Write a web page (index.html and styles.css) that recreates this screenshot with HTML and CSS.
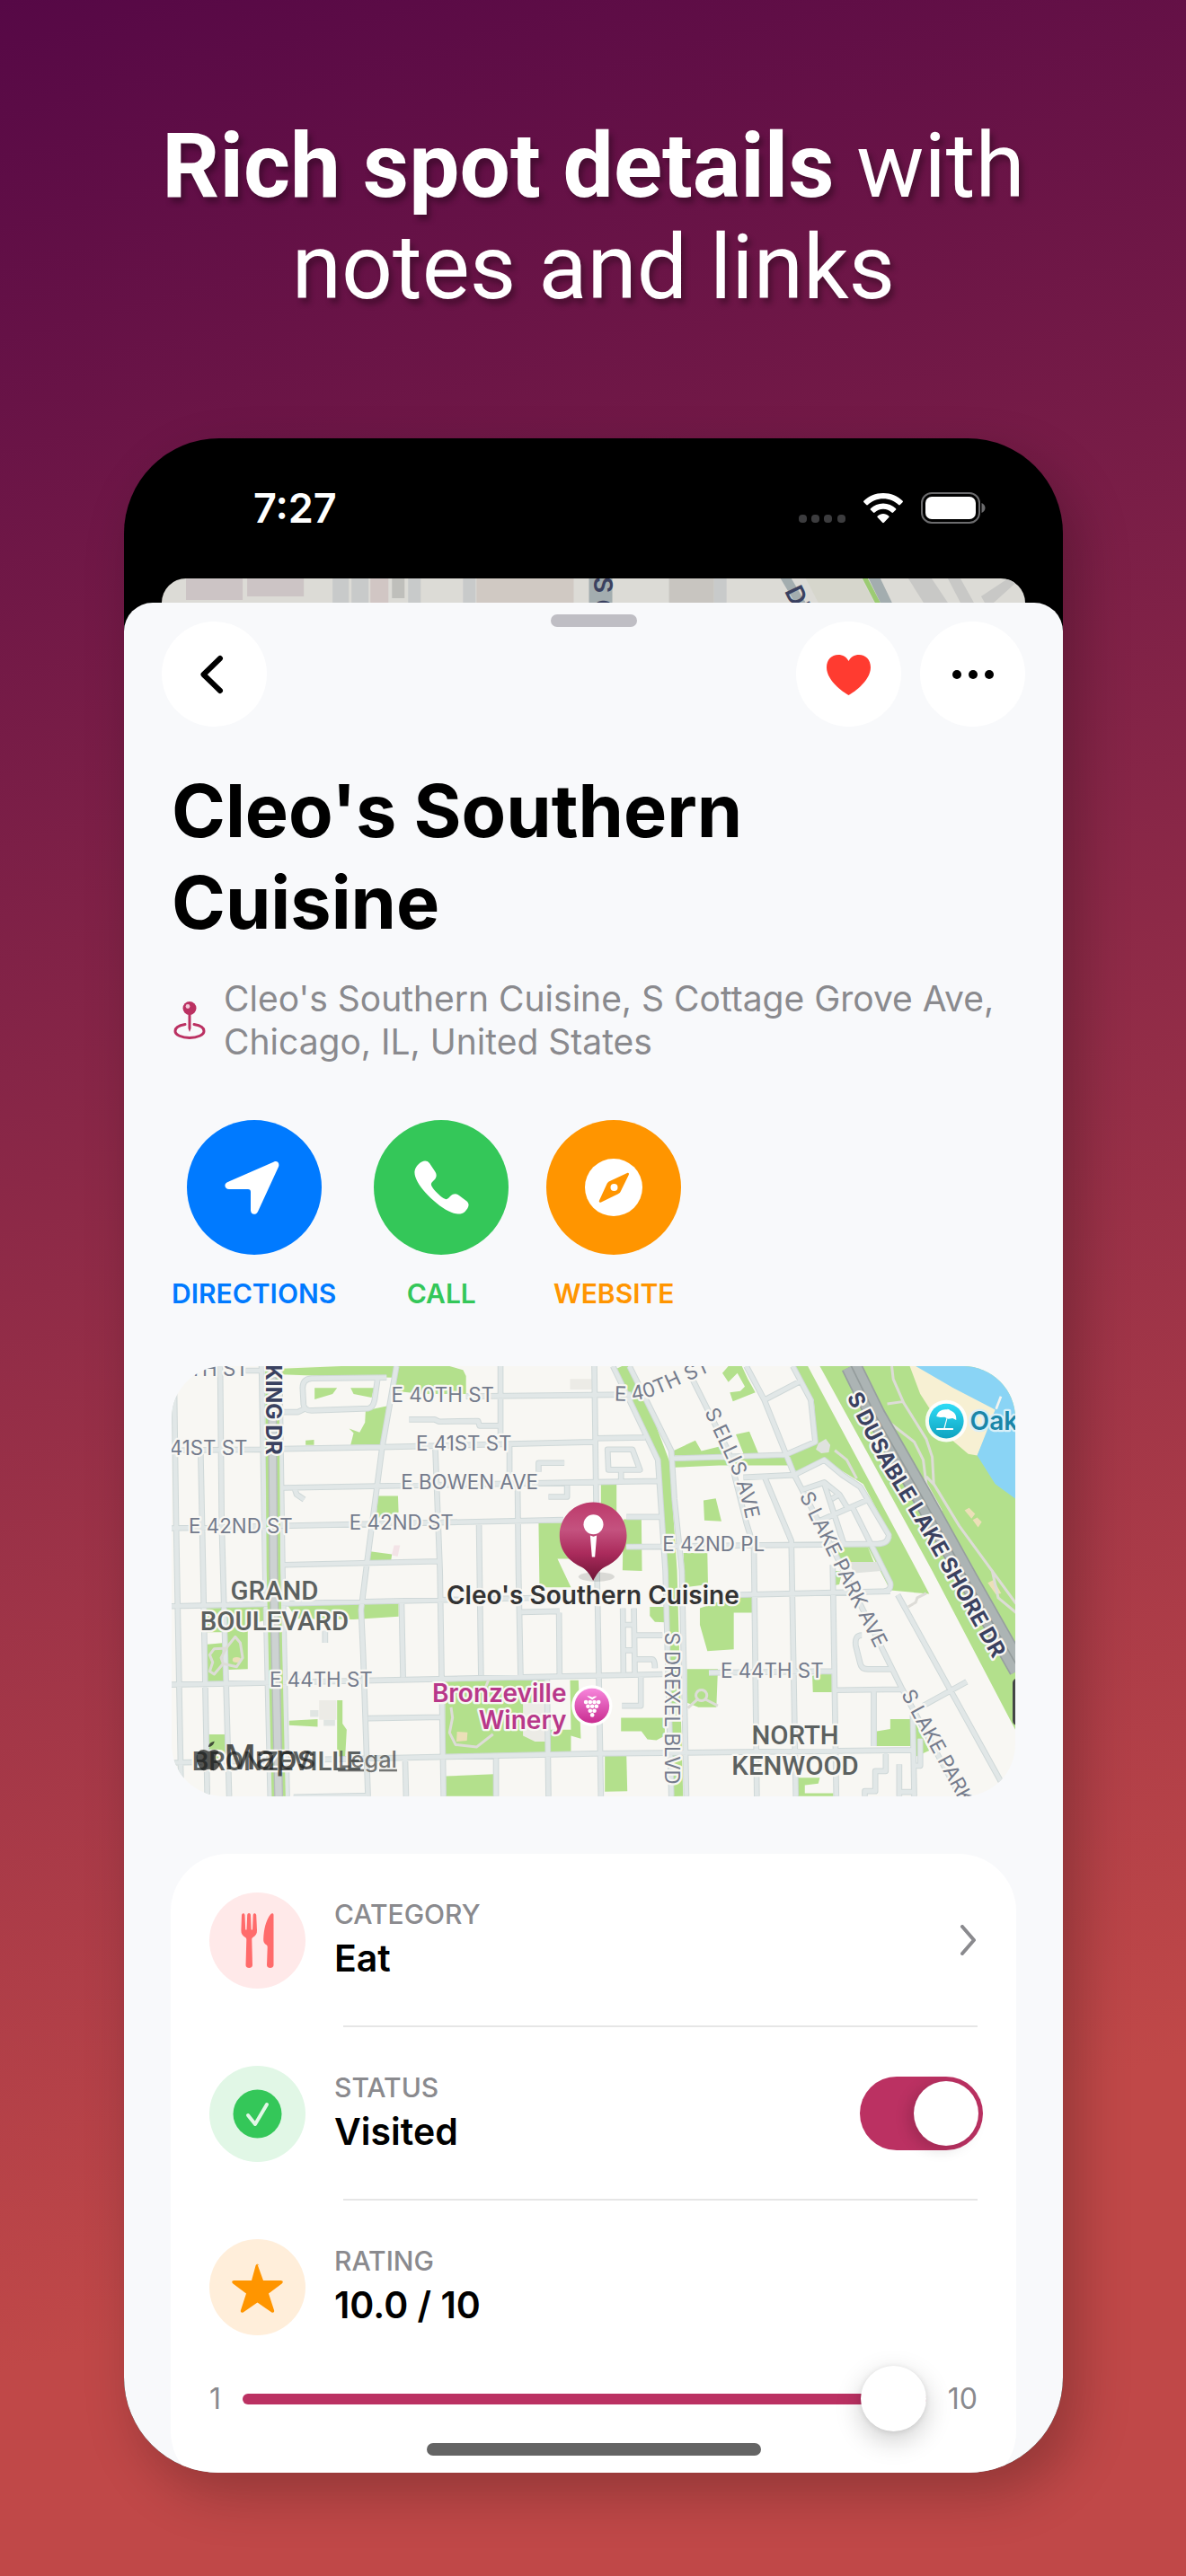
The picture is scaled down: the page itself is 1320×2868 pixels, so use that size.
FILE: index.html
```html
<!DOCTYPE html>
<html lang="en">
<head>
<meta charset="utf-8">
<meta name="viewport" content="width=device-width, initial-scale=1">
<title>Rich spot details with notes and links</title>
<link rel="stylesheet" href="styles.css">
</head>
<body>
<main class="poster">
  <h1 class="headline"><strong>Rich spot details</strong> with<br>notes and links</h1>

  <section class="phone">
    <header class="status-bar">
      <span class="time">7:27</span>
      <div class="indicators">
        <svg class="signal" viewBox="0 0 52 34" aria-hidden="true"><g fill="#3c3c3e"><rect x="0" y="24" width="9" height="9" rx="4"/><rect x="14" y="24" width="9" height="9" rx="4"/><rect x="28" y="24" width="9" height="9" rx="4"/><rect x="43" y="24" width="9" height="9" rx="4"/></g></svg>
        <svg class="wifi" viewBox="0 0 44 34" aria-hidden="true"><g fill="#fff"><path d="M22 0C13.500 0 5.800 3.300.5 8.500c-.6.600-.6 1.200 0 1.800l2.700 2.700c.5.500 1.200.5 1.700 0C9.400 8.800 15.400 6.300 22 6.300S34.600 8.800 39.100 13c.5.500 1.200.5 1.700 0l2.700-2.700c.6-.6.600-1.200 0-1.800C38.200 3.300 30.500 0 22 0z"/><path d="M22 11.500c-5.400 0-10.300 2.100-13.900 5.500-.6.600-.6 1.300 0 1.800l2.800 2.700c.5.500 1.100.5 1.700 0 2.400-2.300 5.700-3.700 9.400-3.700s7 1.400 9.400 3.700c.6.500 1.200.5 1.700 0l2.800-2.700c.6-.5.600-1.200 0-1.800-3.600-3.400-8.500-5.500-13.900-5.500z"/><path d="M22 23c-2.400 0-4.600.9-6.200 2.400-.6.500-.6 1.200-.1 1.700l5.400 5.600c.6.600 1.200.6 1.800 0l5.400-5.600c.5-.5.500-1.200-.1-1.700C26.600 23.900 24.400 23 22 23z"/></g></svg>
        <svg class="battery" viewBox="0 0 72 36" aria-hidden="true"><rect x="1" y="1" width="64" height="33" rx="11" fill="none" stroke="#6b6b6d" stroke-width="2"/><rect x="5" y="5" width="56" height="25" rx="7" fill="#fff"/><path d="M67.500 12c2.500 1 4 3 4 5.500s-1.500 4.500-4 5.500z" fill="#6b6b6d"/></svg>
      </div>
    </header>

    <svg class="peek" viewBox="0 0 960 27" preserveAspectRatio="xMidYMin slice" aria-hidden="true">
      <rect width="960" height="27" fill="#dcdbd6"/>
      <path fill="#ccc4c5" d="M27 0h63v24H27zM95 0h63v20H95z"/>
      <path fill="#c8caca" d="M190 0h18v27h-18zM211 0h19v27h-19zM274 0h14v27h-14zM335 0h14v27h-14zM614 0h14v27h-14z"/>
      <path fill="#d1c6c4" d="M232 0h20v27h-20z"/><path fill="#bfbfbb" d="M256 0h14v22h-14z"/>
      <path fill="#d0c9c3" d="M350 0h108v27H350z"/><path fill="#c8c5c0" d="M564 0h50v27h-50z"/>
      <path fill="#a3adaf" d="M475 0h26v27h-26z"/>
      <path fill="#9ccb73" d="M779 0h6l14 27h-6z"/><path fill="#a3adaf" d="M786 0h13l13 27h-13zM688 0h12l16 27h-12z"/>
      <path fill="#c8c8c6" d="M830 0h26l18 27h-27zM874 0h14l15 27h-15zM911 20l30-20h14L925 27h-10z"/>
      <path fill="#d6d6cc" d="M716 0h62l14 27h-62z"/>
      <g class="peek-label"><text x="0" y="0" transform="translate(480 -2) rotate(90)">S C</text><text x="0" y="0" transform="translate(692 14) rotate(64)">DR</text></g>
    </svg>

    <article class="sheet">
      <span class="grabber"></span>
      <nav class="toolbar">
        <button class="round" type="button" aria-label="Back"><svg viewBox="0 0 117 117"><path d="M65 41 46.500 59 65 77" fill="none" stroke="#000" stroke-width="6" stroke-linecap="round" stroke-linejoin="round"/></svg></button>
        <div class="toolbar-end">
          <button class="round" type="button" aria-label="Favorite"><svg viewBox="0 0 117 117"><path d="M58.500 82C53 79 34 66 34 51c0-8.500 5.500-14 13-14 5 0 9.300 2.600 11.500 7 2.200-4.400 6.500-7 11.500-7 7.500 0 13 5.500 13 14 0 15-19 28-24.500 31z" fill="#ff3b30"/></svg></button>
          <button class="round" type="button" aria-label="More"><svg viewBox="0 0 117 117"><circle cx="41" cy="59" r="5"/><circle cx="59" cy="59" r="5"/><circle cx="77" cy="59" r="5"/></svg></button>
        </div>
      </nav>

      <h2 class="name">Cleo's Southern Cuisine</h2>
      <p class="address">
        <svg class="address-pin" viewBox="0 0 36 42" aria-hidden="true"><g fill="none" stroke="#bb3162"><path d="M13 25.500C6 26.500 2 29.500 2 33c0 4 7 7.500 16 7.500S34 37 34 33c0-3.500-4-6.500-11-7.500" stroke-width="3" stroke-linecap="round"/></g><path d="M16.500 12h3v18L18 34l-1.500-4z" fill="#bb3162"/><circle cx="18" cy="7.500" r="7.500" fill="#bb3162"/><circle cx="16" cy="5.500" r="2.400" fill="#f3c9d8"/></svg>
        <span>Cleo's Southern Cuisine, S Cottage Grove Ave, Chicago, IL, United States</span>
      </p>

      <div class="actions">
        <button class="action directions" type="button"><svg viewBox="0 0 150 150" aria-hidden="true"><path d="M97 46.500c3.500-1.500 6.500 1.500 5 5.500L79 102c-2.200 4.500-8 3.500-8-1.500V80c0-2-1-3-3-3H47c-5 0-6.500-6-1.500-8z" fill="#fff"/></svg>DIRECTIONS</button>
        <button class="action call" type="button"><svg viewBox="0 0 150 150" aria-hidden="true"><path d="M50 49c4-4 9-5 12-1l6 9c2.500 3.500 2 7-.5 9.500l-2.500 2.500c-1.500 1.500-1.500 3 0 5.500 2 3.500 9 10.500 12.500 12.500 2.500 1.500 4 1.500 5.500 0l2.500-2.500c3-2.500 6-3 9.500-.5l8 6c4.500 3.500 2.500 8-1.500 12-4.500 4-11 3-18-.5C65 92 44 69 45.500 57c.4-3.500 2-5.500 4.500-8z" fill="#fff"/></svg>CALL</button>
        <button class="action website" type="button"><svg viewBox="0 0 150 150" aria-hidden="true"><circle cx="75" cy="75" r="32" fill="#fff"/><path d="M90 59c1.500-.7 2.500.4 1.800 2L83 79c-.6 1.500-1.500 2.500-3 3.200L61 91.500c-1.700.8-2.800-.3-2-2L67.500 71c.6-1.300 1.400-2.200 2.700-2.800z" fill="#ff9500"/><circle cx="75.500" cy="75" r="4" fill="#fff"/></svg>WEBSITE</button>
      </div>

      <figure class="map">
        <svg viewBox="33 37 2814 1434" preserveAspectRatio="xMidYMid slice" role="img" aria-label="Map around Cleo's Southern Cuisine">
          <defs>
            <linearGradient id="pin" x1="0" y1="0" x2="0" y2="1"><stop offset="0" stop-color="#bd3a6b"/><stop offset=".35" stop-color="#c4527f"/><stop offset=".65" stop-color="#ab2b5c"/><stop offset="1" stop-color="#6e1436"/></linearGradient>
            <linearGradient id="grape" x1="0" y1="0" x2="0" y2="1"><stop offset="0" stop-color="#f786dc"/><stop offset="1" stop-color="#c92c90"/></linearGradient>
            <linearGradient id="beach" x1="0" y1="0" x2="0" y2="1"><stop offset="0" stop-color="#2fdcf6"/><stop offset="1" stop-color="#0fa3c0"/></linearGradient>
            <path id="p40" d="M1510 152 C1600 160 1660 130 1720 102 L1880 32"/>
            <path id="pellis" d="M1810 190 L1900 380 Q1940 480 1962 620"/>
            <path id="plake" d="M2126 470 L2425 1070"/>
            <path id="plake2" d="M2466 1132 L2720 1596"/>
            <path id="pdusable" d="M2284 140 L2400 370 L2540 600 L2900 1240"/>
          </defs>
          <rect x="33" y="37" width="2820" height="1440" fill="#f8f7f3"/>

          <g fill="#b3e08c">
            <path d="M400 45 600 37H780L770 75 480 68 400 65zM785 37H960L1005 50 1015 70V130H870L780 120zM510 110H585L570 130 510 148zM630 110H708L700 142 640 130zM680 185 750 170 738 298 630 300 640 260 625 245 660 258 678 225zM480 285 508 283V300H480zM722 470H788L790 525 715 545zM695 655 768 665 765 685 692 688zM1257 560H1400V680H1320L1365 775H1260z"/>
            <path d="M150 845 345 838V885L287 900V1048L210 1050V1090H152V965L210 960V925H150zM420 835 790 830V872L640 882 450 880zM585 1152H603V1230L617 1250 612 1340H585zM425 1220 520 1215V1240L425 1235zM157 1266H212V1350H157zM945 1090 1280 1080V1325L945 1332zM1362 1085H1390L1398 1280 1365 1270V1325H1285V1250H1365zM948 1405 1108 1398V1472H948z"/>
            <g transform="translate(1410 0)">
              <path d="M130 548H190L192 720 127 718zM55 430H107V540H55zM295 320 370 285 390 320 450 305 480 335H295zM505 265 550 255 580 328H530zM300 348 670 342 680 368H450L300 375zM460 60 480 37H525L545 80 570 125 495 155 485 125 520 120 535 105 510 60 480 90zM397 485 438 478 457 555 400 552zM330 660H410L412 765 335 775z"/>
              <path d="M700 37H745L1110 720 1150 797 1020 785 945 640 1025 610 930 430 800 350 700 390 675 335 775 285 765 150zM820 640H945L965 690H860zM785 37H1445V1265L1160 720z"/>
            </g>
            <g transform="translate(1410 720)">
              <path d="M218 120H272V172L235 170 218 150zM500 85H560V140H498V262L410 268 385 180V125zM342 328H445L440 455H380L342 440zM760 350 825 340V405H762zM122 490H268V550L240 565 210 562 190 535H122zM68 615H140L143 735 68 737zM700 690H785L780 710 735 715V742H830V752H700zM975 535 1020 528V495H1088V585H975zM1100 500 1130 560 1150 600 1105 620zM825 0 860 0 850 45 828 50z"/>
            </g>
          </g>
          <g fill="#ecebe6"><path d="M525 1152h58v65h-58zM1205 1160h80v130h-40l-40-20zM1362 80h75v35h-75z"/><path d="M540 1217h38v20h-38zM495 1185h28v22h-28z" fill="#e0e5e2"/><path d="m2190 295 25-15 15 20-5 25-25 3-18-13zM2290 690h95l15 30-90 8z" fill="#dfe2de"/></g>
          <path d="M775 635h20l-8 37-20-4z" fill="#f3e3e6"/>
          <g fill="#ecdfb8"><ellipse cx="250" cy="1017" rx="14" ry="9"/><path d="m985 1257 35 2-2 28-35 3zM2678 518l15-8 20 20-12 16zM2705 550l15-8 15 15-12 18zM2755 760l20-10 25 45-18 3z"/></g>

          <g transform="translate(1410 0)">
            <path d="M1085 37H1150L1375 185 1310 335 1280 330 1210 270 1120 130z" fill="#f7f0d3"/>
            <path d="M1105 37H1445V485L1370 430 1310 335 1370 182 1230 110z" fill="#8ad4f5"/>
            <path d="m1373 180 16-42" stroke="#f4f4f0" stroke-width="8"/>
          </g>

          <g fill="none" stroke-linejoin="round" stroke-linecap="butt">
            <path d="M1535 37 1630 240 1675 360 1700 720 1720 1472" stroke="#b3e08c" stroke-width="38"/>
            <g stroke="#cfd8d8" stroke-width="20">
              <path id="roads" d="M42 120 48 560 65 1472M195 37 200 560 225 1472M130 330 138 720 152 1472M333 37 345 720 362 1472M393 37 403 720 418 1472M783 37 735 310 685 690 665 850 672 1000 688 1472M280 52H333M1015 138 1565 132M33 318 330 315M405 313 735 307 1440 290M1443 278 1612 275M405 443 1655 420M33 578 1340 550M1550 540H1665M408 700 925 688M33 838 1340 808M1930 800 2430 788M1550 640 2400 630M33 1100 1670 1065M1825 1060 2240 1055M33 1360 1440 1330 2510 1318M912 300 928 720 940 1472M1130 37V265M1160 300V400M1187 440 1190 720 1197 1068M1058 560 1065 1068M1325 860 1327 1068M1200 858 1327 855M1443 37 1452 720 1465 1472M800 825 805 1075M545 920V960M688 1212 935 1208M1285 1075 1290 1472M1115 1345V1472M812 1350 815 1472M440 1475 690 1470M750 75 500 78Q470 80 470 110L473 165Q475 185 500 185L690 178Q705 175 710 150L720 80M405 190H455L475 180M825 215H910L925 222 1055 220 1060 236H1130M1257 390V360H1343M1290 473H1352V430M443 445 450 465 475 482M1505 37 1560 150 1655 350 1680 720 1700 1472M1560 37 1700 320 1710 480 1735 720 1750 1472M1487 315H1570L1595 383H1490zM1532 385V415M1765 70 1890 320 1950 560 1975 640 1985 1472M1950 37 2010 150 2110 400 2240 650 2470 1115 2700 1540M1705 345 2080 333 2180 290 2165 150 2105 37M2010 150 2125 90M2010 405 2100 620 2115 1472M1940 408 2110 400 2210 350 2270 400 2330 440 2425 600Q2425 630 2390 630M2135 450 2210 425 2260 465 2290 515M2210 430 2275 630M2190 555 2350 485M2235 480 2260 465M2305 510 2360 620 2430 760Q2435 785 2410 788M2238 700 2250 1472M1538 845 1540 1060M1575 845 1578 1060M1540 900H1575M1540 985H1575M1575 935H1670M1578 1015H1635Q1645 1015 1645 1045M1535 1170H1598V1070M2250 1118 2470 1115M2375 1120V1305M2505 1200 2510 1472M2530 1280V1370H2515M2460 1365V1472M2460 1458H2510M2415 1320V1388H2380V1455H2345V1472M2335 935Q2310 935 2315 970L2330 1030Q2335 1050 2360 1048H2435M2455 800 2800 1425M2540 1170 2685 1090"/>
            </g>
            <use href="#roads" stroke="#e1e7e7" stroke-width="14"/>
            <path d="M368 37 373 720 390 1472" stroke="#b3e08c" stroke-width="46"/>
            <path d="M368 37 373 720 390 1472" stroke="#b7bdbd" stroke-width="30"/>
            <path d="M368 37 373 720 390 1472" stroke="#cdd2d2" stroke-width="22"/>
            <g stroke="#dddcd7" stroke-width="9">
              <path d="M2435 37 2440 80 2475 160 2550 280 2570 340 2575 430 2660 570 2850 830M2340 60 2420 220 2510 290 2540 350 2550 430 2600 520M2475 155 2420 163M2245 318 2285 350 2318 412M2550 405 2578 435M2770 720 2790 810 2850 860"/>
              <path d="M245 940 262 960 270 1010 250 1040 205 1030 175 1065 160 1055 170 1025 160 1000 175 980 215 978zM215 978 198 1010 205 1030M965 1175 970 1210 960 1260 980 1300 1050 1308 1105 1265M1090 1085 1075 1120M1800 1117a18 18 0 1 0 .1 0M1788 1148 1755 1178M1812 1148 1855 1170M2490 840 2515 825 2520 810 2550 795"/>
            </g>
            <path d="M2300 37 2380 200 2540 480 2690 750 2860 1050" stroke="#979f9f" stroke-width="70"/>
            <path d="M2300 37 2380 200 2540 480 2690 750 2860 1050" stroke="#acb4b4" stroke-width="60"/>
            <path d="M2300 37 2380 200 2540 480 2690 750 2860 1050" stroke="#949c9c" stroke-width="5"/>
          </g>
          <rect x="2838" y="1078" width="40" height="158" rx="16" fill="#444646"/>

          <g class="street">
            <text x="92" y="70">TH ST</text>
            <text x="766" y="157">E 40TH ST</text>
            <text x="26" y="335">41ST ST</text>
            <text x="848" y="319">E 41ST ST</text>
            <text x="798" y="447">E BOWEN AVE</text>
            <text x="90" y="593">E 42ND ST</text>
            <text x="626" y="581">E 42ND ST</text>
            <text x="1670" y="655">E 42ND PL</text>
            <text x="360" y="1107">E 44TH ST</text>
            <text x="1864" y="1076">E 44TH ST</text>
            <text transform="translate(1678 925) rotate(90)">S DREXEL BLVD</text>
            <text><textPath href="#p40">E 40TH ST</textPath></text>
            <text><textPath href="#pellis">S ELLIS AVE</textPath></text>
            <text><textPath href="#plake">S LAKE PARK AVE</textPath></text>
            <text><textPath href="#plake2">S LAKE PARK</textPath></text>
          </g>
          <g class="avenue">
            <text transform="translate(347 32) rotate(90)">KING DR</text>
            <text><textPath href="#pdusable">S DUSABLE LAKE SHORE DR</textPath></text>
          </g>
          <g class="hood">
            <text x="376" y="815">GRAND</text><text x="376" y="917">BOULEVARD</text>
            <text x="2113" y="1299">NORTH</text><text x="2113" y="1401">KENWOOD</text>
            <text x="383" y="1386">BRONZEVILLE</text>
          </g>
          <g class="credit">
            <path d="M176 1289c-2 10-9 18-20 19 0-10 9-18 20-19zM191 1325c-8 5-12 12-11 20 1 9 7 15 15 18-4 12-13 23-22 23-6 0-9-4-16-4s-10 4-16 4c-12 0-25-24-25-42 0-17 11-27 23-27 7 0 13 5 18 5 4 0 11-5 19-5 6 0 12 3 15 8z"/>
            <text x="208" y="1384">Maps</text>
            <text class="legal" x="588" y="1376">Legal</text>
          </g>

          <g class="poi">
            <ellipse cx="1450" cy="740" rx="60" ry="16" fill="#000" opacity=".12"/>
            <path d="M1439 491c63 0 112 49 112 111 0 55-35 88-75 106-17 10-25 22-37 45-12-23-20-35-37-45-40-18-75-51-75-106 0-62 49-111 112-111z" fill="url(#pin)"/>
            <circle cx="1440" cy="565" r="33" fill="#fff"/><path d="m1429 602 11 4 11-4-6 72h-10z" fill="#fff"/>
            <circle cx="1435" cy="1170" r="68" fill="#fff"/><circle cx="1435" cy="1170" r="58" fill="url(#grape)"/>
            <g fill="#fff"><circle cx="1415" cy="1158" r="7"/><circle cx="1429" cy="1158" r="7"/><circle cx="1443" cy="1158" r="7"/><circle cx="1457" cy="1158" r="7"/><circle cx="1422" cy="1172" r="7"/><circle cx="1436" cy="1172" r="7"/><circle cx="1450" cy="1172" r="7"/><circle cx="1429" cy="1187" r="7"/><circle cx="1443" cy="1187" r="7"/><circle cx="1436" cy="1201" r="7"/><path d="M1418 1138q10-2 18 4 8-5 16-3l-16 11z"/></g>
            <circle cx="2617" cy="220" r="70" fill="#fff" opacity=".9"/><circle cx="2617" cy="220" r="58" fill="url(#beach)"/>
            <g fill="#fff"><path d="M2584 205c4-19 22-27 40-22 18 4 28 15 26 34l-12-6-14 2-13-6-14 1z"/><path d="m2620 180 8 2-16 63h-4l14-50z"/><path d="M2584 244h56v6h-56z"/></g>
            <text class="place" x="1438" y="832">Cleo's Southern Cuisine</text>
            <text class="winery" x="1350" y="1158">Bronzeville</text><text class="winery" x="1350" y="1247">Winery</text>
            <text class="oak" x="2696" y="251">Oak</text>
          </g>
        </svg>
      </figure>

      <section class="card">
        <div class="row">
          <svg class="badge eat" viewBox="0 0 107 107" aria-hidden="true"><g fill="#ff6b6b"><path d="M36 25c.7-2.500 3-2.500 3.500 0l.7 16.500h1.300L42.200 25c.2-2.700 3.600-2.700 3.800 0l.7 16.500H48L48.700 25c.5-2.500 2.800-2.500 3.500 0l.8 17c.2 4-1.500 6-4.500 8-1 .7-1.300 1.300-1.200 2.500L48 81c0 4-7.500 4-7.500 0l.8-28.500c0-1.200-.3-1.800-1.300-2.500-3-2-4.800-4-4.600-8z"/><path d="M71.500 25v56c0 4-7.500 4-7.500 0l.7-20c0-1-.2-1.800-1-2.400-2.700-2-3.700-3.600-3.500-6.600C60.500 41 63 31 68 24.500c1.500-2 3.500-1.500 3.500.5z"/></g></svg>
          <div class="row-text"><span class="label">CATEGORY</span><span class="value">Eat</span></div>
          <button class="disclosure" type="button" aria-label="Change category"><svg viewBox="0 0 20 34"><path d="m3 2 13 15L3 32" fill="none" stroke="#8a8a8e" stroke-width="4" stroke-linecap="round" stroke-linejoin="round"/></svg></button>
        </div>
        <div class="row">
          <svg class="badge visited" viewBox="0 0 107 107" aria-hidden="true"><circle cx="53.500" cy="53.500" r="27" fill="#34c759"/><path d="m43 55 8 10 13-22" fill="none" stroke="#e1f7e6" stroke-width="4" stroke-linecap="round" stroke-linejoin="round"/></svg>
          <div class="row-text"><label class="label" for="visited">STATUS</label><span class="value">Visited</span></div>
          <input class="toggle" type="checkbox" id="visited" checked>
        </div>
        <div class="row last">
          <svg class="badge rating" viewBox="0 0 107 107" aria-hidden="true"><path d="M53.500 28 60 46h19.500c2.500 0 3 2 1.200 3.500L66 60.500l6 18.500c.7 2.500-1 3.500-3 2.200L53.500 70.500 38 81.200c-2 1.300-3.700.3-3-2.200l6-18.500-14.700-11c-1.800-1.500-1.300-3.500 1.200-3.500H47l4.500-16.500c1-2.500 3-2.500 4 0z" fill="#ff9500"/></svg>
          <div class="row-text"><label class="label" for="rating">RATING</label><span class="value">10.0 / 10</span></div>
        </div>
        <div class="scale"><span>1</span><input class="slider" type="range" id="rating" min="1" max="10" value="10"><span>10</span></div>
      </section>
    </article>
    <span class="home"></span>
  </section>
</main>
</body>
</html>
```
FILE: styles.css
```css
* { box-sizing: border-box; }
body { margin: 0; font-family: Inter, "Liberation Sans", sans-serif; color: #000; }
button { border: 0; padding: 0; font: inherit; cursor: pointer; }

.poster {
  min-height: 100vh;
  padding: 128px 137px 116px 138px;
  background: linear-gradient(165deg, #560846 0%, #c04848 82%);
}
.headline {
  margin: 0 0 134px;
  font: 400 100px/113px Roboto, sans-serif;
  color: #fff;
  text-align: center;
  text-shadow: 4px 6px 6px rgba(0, 0, 0, .3);
}
.headline strong { font-weight: 700; }

.phone {
  position: relative;
  overflow: hidden;
  border-radius: 106px;
  background: #000;
  box-shadow: 16px 24px 60px rgba(0, 0, 0, .24);
}
.status-bar {
  display: flex;
  align-items: center;
  justify-content: space-between;
  padding: 50px 86px 50px 144px;
  line-height: 56px;
}
.time { color: #fff; font-size: 45px; font-weight: 600; }
.indicators { display: flex; align-items: center; gap: 20px; }
.signal { width: 52px; height: 34px; }
.wifi { width: 44px; height: 34px; }
.battery { width: 72px; height: 36px; }

.peek { display: block; width: calc(100% - 84px); height: 27px; margin: 0 42px; border-radius: 27px 27px 0 0; }
.peek-label { font-size: 28px; font-weight: 600; fill: #3a4160; }

.sheet {
  position: relative;
  padding: 21px 42px 0;
  border-radius: 32px 32px 0 0;
  background: #f8f9fb;
}
.grabber {
  position: absolute;
  top: 13px;
  left: 50%;
  width: 96px;
  height: 14px;
  margin-left: -48px;
  border-radius: 7px;
  background: #bfbec4;
}
.toolbar, .toolbar-end { display: flex; justify-content: space-between; gap: 21px; }
.round { width: 117px; height: 117px; border-radius: 50%; background: #fff; }
.round svg { display: block; }

.name { margin: 43px 10px 0 11px; font-size: 81px; line-height: 102px; font-weight: 700; max-width: 720px; }
.address {
  display: flex;
  align-items: center;
  gap: 20px;
  margin: 32px 10px 0 13px;
  color: #8a8a8e;
  font-size: 39px;
  line-height: 48px;
}
.address-pin { flex: none; width: 36px; height: 42px; }

.actions { display: flex; gap: 42px; margin: 63px 11px 0; }
.action {
  display: flex;
  flex-direction: column;
  align-items: center;
  gap: 25px;
  background: none;
  font-size: 30px;
  line-height: 36px;
  font-weight: 600;
}
.action svg { width: 150px; height: 150px; border-radius: 50%; background: currentColor; }
.directions { color: #007aff; }
.call { color: #34c759; }
.website { color: #ff9500; }

.map { margin: 63px 11px 0; border-radius: 58px; overflow: hidden; }
.map svg { display: block; width: 100%; }
.map text { paint-order: stroke; stroke: #f8f7f3; stroke-width: 14px; stroke-linejoin: round; }
.street { font-size: 67px; fill: #747b8c; }
.avenue { font-size: 73px; font-weight: 700; fill: #3a4160; }
.hood { font-family: Roboto, sans-serif; font-size: 88px; font-weight: 500; fill: #5c6160; text-anchor: middle; }
.credit { font-size: 116px; font-weight: 500; fill: #1c1d1c; fill-opacity: .75; }
.map .credit text { stroke: none; }
.credit .legal { font-size: 76px; text-decoration: underline; fill: #4a4b4a; }
.poi { font-size: 84px; font-weight: 600; }
.place { fill: #333; text-anchor: middle; }
.winery { fill: #b8388a; text-anchor: end; }
.oak { fill: #1a86a8; }
.map .oak { stroke: #d8eff8; }

.card {
  margin: 64px 10px -18px;
  padding: 0 43px 64px;
  border-radius: 64px;
  background: #fff;
}
.row { position: relative; display: flex; align-items: center; gap: 32px; padding: 43px 0; }
.row::after { content: ""; position: absolute; left: 149px; right: 0; bottom: 0; height: 2px; background: #e6e6e6; }
.row.last { padding-bottom: 35px; }
.row.last::after { content: none; }
.badge { flex: none; width: 107px; height: 107px; border-radius: 50%; }
.eat { background: #ffe9e9; }
.visited { background: #e1f7e6; }
.rating { background: #ffeeda; }
.row-text { display: flex; flex: 1; flex-direction: column; gap: 6px; padding-bottom: 2px; }
.label { font-size: 30px; line-height: 36px; font-weight: 500; color: #8a8a8e; }
.value { font-size: 41px; line-height: 50px; font-weight: 600; }
.disclosure { width: 20px; height: 34px; background: none; }
.disclosure svg { display: block; }

.toggle {
  appearance: none;
  display: flex;
  width: 137px;
  height: 82px;
  margin: 0 -6px 0 0;
  padding: 5px;
  border-radius: 41px;
  background: #d9d9dc;
}
.toggle::before { content: ""; width: 72px; height: 72px; border-radius: 50%; background: #fff; box-shadow: -6px 4px 16px rgba(0, 0, 0, .15); }
.toggle:checked { justify-content: flex-end; background: #bb3162; }

.scale { display: flex; align-items: center; gap: 24px; font-size: 32px; line-height: 40px; color: #8a8a8e; }
.slider { appearance: none; flex: 1; min-width: 0; height: 72px; margin: 0; background: none; }
.slider::-webkit-slider-runnable-track { height: 12px; border-radius: 6px; background: #bb3162; }
.slider::-webkit-slider-thumb {
  appearance: none;
  width: 73px;
  height: 73px;
  margin-top: -31px;
  border-radius: 50%;
  background: #fff;
  box-shadow: 0 10px 30px rgba(0, 0, 0, .2), 0 1px 6px rgba(0, 0, 0, .1);
}

.home {
  position: absolute;
  bottom: 19px;
  left: 50%;
  width: 372px;
  height: 14px;
  margin-left: -186px;
  border-radius: 7px;
  background: #646464;
}
```
